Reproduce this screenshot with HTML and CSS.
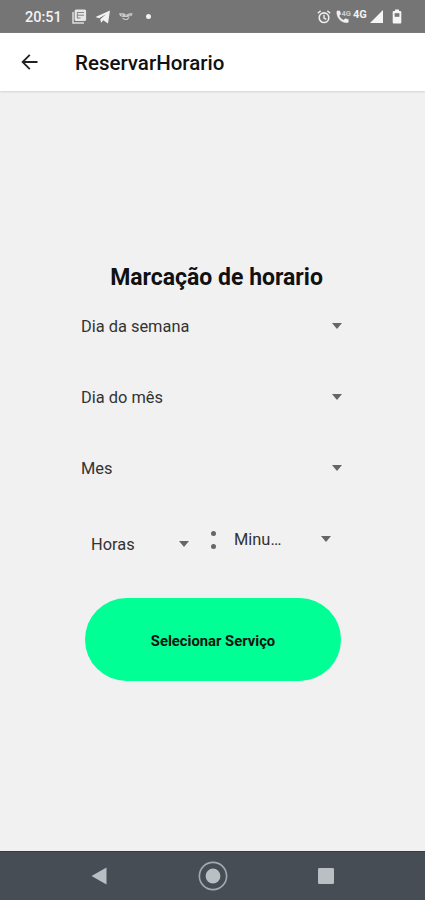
FILE: index.html
```html
<!DOCTYPE html>
<html lang="pt-BR">
<head>
    <meta charset="UTF-8">
    <meta name="viewport" content="width=device-width, initial-scale=1.0">
    <title>ReservarHorario</title>
    <link rel="stylesheet" href="styles.css">
</head>
<body>

    <div class="status">
        <span class="clock">20:51</span>
        <svg class="news" width="15" height="15" viewBox="0 0 15 15">
            <path d="M1 3v11h11" fill="none" stroke="#ddd" stroke-width="1.5"/>
            <rect x="2.6" y="0.5" width="11.5" height="11.5" rx="1.5" fill="#e6e6e6"/>
            <path d="M5 3.5h7M5 6.2h7M5 9h3.5M5.3 3.5V9" fill="none" stroke="#858585" stroke-width="1"/>
        </svg>
        <svg class="plane" width="16" height="14" viewBox="0 0 16 14">
            <path d="M0.5 7L15 0.5L13 13.5L8.3 10.3L6 12.8L5.3 9.2L11 4.2L4 8.3Z" fill="#f2f2f2"/>
        </svg>
        <svg class="badge" width="16" height="10" viewBox="0 0 16 10">
            <path d="M1 1.2h5l1 1h3l1-1h3.5L14 3.5L9.5 5H5L2 4z" fill="#ccc"/>
            <path d="M3 3h2M7 3h2M11 3h1.5" stroke="#888" stroke-width="1"/>
            <path d="M4.5 6.2l2.5 1.3h2L11 5.5" fill="none" stroke="#ccc" stroke-width="1.1"/>
        </svg>
        <span class="point"></span>
        <svg class="alarm" width="14" height="14" viewBox="0 0 14 14">
            <circle cx="7" cy="7.7" r="4.8" fill="none" stroke="#eee" stroke-width="1.6"/>
            <path d="M0.8 3.2L3.6 0.9M13.2 3.2L10.4 0.9M7 4.8v3.2l2.3 1.4" fill="none" stroke="#eee" stroke-width="1.4"/>
        </svg>
        <svg class="call" width="15" height="15" viewBox="0 0 15 15">
            <path d="M1 2h2.8l.7 3.2L3 6.8c1 2.1 2.4 3.5 4.5 4.5L9 9.8l3.2.7v2.8C6 14.8 0 8.5 1 2z" fill="#f2f2f2" stroke="#f2f2f2" stroke-width="0.6"/>
            <text x="5.4" y="7.4" class="call-text">4G</text>
        </svg>
        <span class="net">4G</span>
        <svg class="signal" width="13" height="13" viewBox="0 0 13 13">
            <path d="M0 13L13 0V13Z" fill="#f5f5f5"/>
        </svg>
        <svg class="battery" width="10" height="15" viewBox="0 0 10 15">
            <path d="M3 0.5h4V2h1.3q1 0 1 1v10.5q0 1-1 1H1.7q-1 0-1-1V3q0-1 1-1H3z" fill="#f5f5f5"/>
            <rect x="2.6" y="4.2" width="4.8" height="3.6" fill="#777"/>
        </svg>
    </div>

    <div class="header">
        <svg class="back" width="18" height="18" viewBox="0 0 18 18">
            <path d="M16.5 9H2M8.8 1.8L1.6 9L8.8 16.2" fill="none" stroke="#222" stroke-width="1.8"/>
        </svg>
        <h1>ReservarHorario</h1>
    </div>

    <div class="content">
        <h2>Marcação de horario</h2>
        <div class="picker"><span>Dia da semana</span><i class="arrow"></i></div>
        <div class="picker"><span>Dia do mês</span><i class="arrow"></i></div>
        <div class="picker"><span>Mes</span><i class="arrow"></i></div>
        <div class="time">
            <div class="hours"><span>Horas</span><i class="arrow"></i></div>
            <div class="colon"><i></i><i></i></div>
            <div class="minutes"><span>Minu…</span><i class="arrow"></i></div>
        </div>
        <button class="service">Selecionar Serviço</button>
    </div>

    <div class="navbar">
        <svg width="16" height="18" viewBox="0 0 16 18">
            <path d="M0.5 9L15.5 0.4V17.6Z" fill="#b9bfc2"/>
        </svg>
        <svg width="30" height="30" viewBox="0 0 30 30">
            <circle cx="15" cy="15" r="13.6" fill="none" stroke="#a3aaad" stroke-width="1.6"/>
            <circle cx="15" cy="15" r="7.4" fill="#b9bfc2"/>
        </svg>
        <svg width="16" height="16" viewBox="0 0 16 16">
            <rect width="16" height="16" rx="1.2" fill="#b9bfc2"/>
        </svg>
    </div>

</body>
</html>
```

FILE: styles.css
```css
* {
    box-sizing: border-box;
}

body {
    margin: 0;
    height: 900px;
    display: flex;
    flex-direction: column;
    overflow: hidden;
    background: #f1f1f1;
    font-family: Roboto, sans-serif;
    color: #111;
}

svg {
    display: block;
    flex: none;
}

.status {
    height: 33px;
    padding-left: 25px;
    padding-right: 23px;
    display: flex;
    align-items: center;
    background: #757575;
    color: #f2f2f2;
}

.clock {
    width: 47px;
    padding-top: 1px;
    font-size: 14.5px;
    font-weight: 500;
}

.plane {
    margin-left: 8px;
}

.badge {
    margin-left: 7px;
}

.point {
    width: 5px;
    height: 5px;
    margin-left: 12px;
    border-radius: 50%;
    background: #f2f2f2;
}

.alarm {
    margin-left: auto;
}

.call {
    margin-left: 5px;
}

.call-text {
    font-size: 7.5px;
    font-weight: 700;
    fill: #ccc;
}

.net {
    width: 17px;
    margin-left: 2px;
    margin-bottom: 4px;
    font-size: 11px;
    font-weight: 700;
    line-height: 12px;
}

.signal {
    margin-right: 9px;
}

.header {
    height: 58px;
    padding-left: 21px;
    display: flex;
    align-items: center;
    background: #fff;
    box-shadow: 0 1px 2px #d4d4d4;
}

.header h1 {
    margin: 2px 0 0 36px;
    font-size: 20.5px;
    font-weight: 500;
}

.content {
    flex: 1;
    padding: 171px 81px 0;
    display: flex;
    flex-direction: column;
}

h2 {
    height: 29px;
    margin: 0;
    padding-left: 8px;
    font-size: 23px;
    font-weight: 700;
    line-height: 31px;
    text-align: center;
    white-space: nowrap;
}

.picker {
    height: 71px;
    padding-right: 2px;
    display: flex;
    align-items: center;
    justify-content: space-between;
    color: #333;
    font-size: 16.4px;
}

.arrow {
    margin-bottom: 2px;
    border: 5px solid transparent;
    border-top: 6px solid #666;
    border-bottom: 0;
}

.time {
    height: 94px;
    padding-top: 26px;
    display: flex;
    align-items: flex-start;
    color: #333;
    font-size: 16.4px;
    line-height: 20px;
}

.hours,
.minutes {
    display: flex;
    align-items: center;
    justify-content: space-between;
}

.hours {
    width: 98px;
    margin: 5px 0 0 10px;
}

.minutes {
    width: 97px;
    margin-left: 18px;
}

.colon {
    width: 5px;
    height: 18px;
    margin: 1px 0 0 22px;
    display: flex;
    flex-direction: column;
    justify-content: space-between;
}

.colon i {
    height: 5px;
    border-radius: 50%;
    background: #666;
}

.service {
    width: 256px;
    height: 83px;
    margin-left: 4px;
    padding: 3px 0 0;
    border: 0;
    border-radius: 42px;
    background: #00ff94;
    color: #111;
    font-family: inherit;
    font-size: 14.8px;
    font-weight: 700;
}

.navbar {
    height: 49px;
    padding: 0 91px;
    display: flex;
    align-items: center;
    justify-content: space-between;
    border-top: 1px solid #333e43;
    background: #464d54;
}
```
